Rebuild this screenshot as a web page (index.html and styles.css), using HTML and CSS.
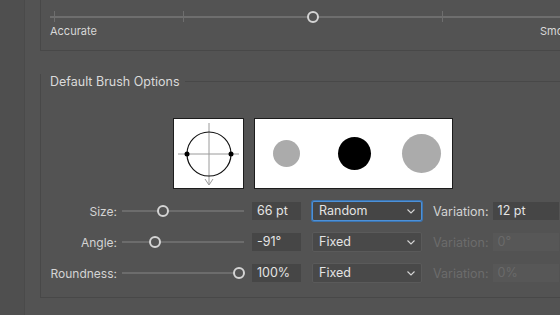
FILE: index.html
```html
<!DOCTYPE html>
<html lang="en">

<head>
    <meta charset="UTF-8">
    <title>Brush Options</title>
    <link rel="stylesheet" href="styles.css">
</head>

<body>
    <div id="sidebar"></div>
    <section id="dialog">
        <div class="topPanel">
            <div class="fidelity">
                <span class="tick tick1"></span>
                <span class="tick tick2"></span>
                <span class="tick tick3"></span>
                <span class="knob topKnob"></span>
            </div>
            <div class="fidelityLabels">
                <span>Accurate</span>
                <span>Smooth</span>
            </div>
        </div>

        <div class="group">
            <div class="groupTitle">
                <span>Default Brush Options</span>
            </div>

            <div class="previews">
                <div class="preview angleBox">
                    <svg width="69" height="69" viewBox="0 0 69 69">
                        <line x1="4" y1="35" x2="65" y2="35" stroke="#9a9a9a" stroke-width="1" />
                        <line x1="35" y1="4" x2="35" y2="65" stroke="#9a9a9a" stroke-width="1" />
                        <polyline points="31,60 35,66 39,60" fill="none" stroke="#9a9a9a" stroke-width="1" />
                        <circle cx="35" cy="35" r="22" fill="none" stroke="#111" stroke-width="1.2" />
                        <circle cx="13" cy="35" r="2.5" fill="#000" />
                        <circle cx="57" cy="35" r="2.5" fill="#000" />
                    </svg>
                </div>
                <div class="preview dotsBox">
                    <span class="dot dotSmall"></span>
                    <span class="dot dotMid"></span>
                    <span class="dot dotBig"></span>
                </div>
            </div>

            <div class="optionRow">
                <label class="rowLabel">Size:</label>
                <div class="track"><span class="knob" style="left: 41px;"></span></div>
                <div class="valueBox">66 pt</div>
                <div class="dropdown focused">Random
                    <svg class="chev" width="8" height="5" viewBox="0 0 8 5"><polyline points="0.5,0.5 4,4 7.5,0.5" fill="none" stroke="#d6d6d6" stroke-width="1.1" /></svg>
                </div>
                <label class="varLabel">Variation:</label>
                <div class="valueBox varBox">12 pt</div>
            </div>

            <div class="optionRow">
                <label class="rowLabel">Angle:</label>
                <div class="track"><span class="knob" style="left: 33px;"></span></div>
                <div class="valueBox">-91°</div>
                <div class="dropdown">Fixed
                    <svg class="chev" width="8" height="5" viewBox="0 0 8 5"><polyline points="0.5,0.5 4,4 7.5,0.5" fill="none" stroke="#d6d6d6" stroke-width="1.1" /></svg>
                </div>
                <label class="varLabel disabled">Variation:</label>
                <div class="valueBox varBox disabledBox">0°</div>
            </div>

            <div class="optionRow">
                <label class="rowLabel">Roundness:</label>
                <div class="track"><span class="knob" style="left: 117px;"></span></div>
                <div class="valueBox">100%</div>
                <div class="dropdown">Fixed
                    <svg class="chev" width="8" height="5" viewBox="0 0 8 5"><polyline points="0.5,0.5 4,4 7.5,0.5" fill="none" stroke="#d6d6d6" stroke-width="1.1" /></svg>
                </div>
                <label class="varLabel disabled">Variation:</label>
                <div class="valueBox varBox disabledBox">0%</div>
            </div>
        </div>
    </section>
</body>

</html>
```

FILE: styles.css
```css
body {
    margin: 0;
    padding: 0;
    width: 560px;
    height: 315px;
    overflow: hidden;
    display: flex;
    background-color: #535353;
    font-family: 'Inter', sans-serif;
    font-size: 12px;
    color: #dcdcdc;
}

#sidebar {
    width: 24px;
    flex-shrink: 0;
    background-color: #4f4f4f;
    border-right: 1px solid #4a4a4a;
}

#dialog {
    flex: 1;
    padding-left: 15px;
    min-width: 0;
    overflow: hidden;
}

.topPanel {
    height: 51px;
    padding-top: 16px;
    padding-left: 9px;
    border-left: 1px solid #484848;
    border-bottom: 1px solid #484848;
    box-sizing: border-box;
}

.fidelity {
    position: relative;
    height: 2px;
    width: 600px;
    background-color: #6e6e6e;
}

.tick {
    position: absolute;
    top: -5px;
    width: 1px;
    height: 11px;
    background-color: #6e6e6e;
}

.tick1 { left: 4px; }
.tick2 { left: 133px; }
.tick3 { left: 392px; }

.knob {
    position: absolute;
    top: -5px;
    width: 8px;
    height: 8px;
    margin-left: -6px;
    border: 2px solid #d4d4d4;
    border-radius: 50%;
    background-color: #535353;
}

.topKnob {
    left: 263px;
}

.fidelityLabels {
    display: flex;
    justify-content: space-between;
    width: 530px;
    margin-top: 6px;
    font-size: 11px;
    color: #d8d8d8;
}

.group {
    margin-top: 31px;
    height: 223px;
    border-left: 1px solid #484848;
    border-bottom: 1px solid #484848;
}

.groupTitle {
    display: flex;
    align-items: center;
    margin-top: -8px;
    padding-left: 9px;
    font-size: 12.5px;
    color: #dadada;
}

.groupTitle::after {
    content: "";
    flex: 1;
    height: 1px;
    margin-left: 5px;
    background-color: #484848;
}

.previews {
    display: flex;
    gap: 10px;
    margin-top: 29px;
    padding-left: 132px;
}

.preview {
    height: 69px;
    border: 1px solid #1c1c1c;
    background-color: #fff;
}

.angleBox {
    width: 69px;
}

.dotsBox {
    width: 197px;
    display: flex;
    align-items: center;
}

.dot {
    display: block;
    border-radius: 50%;
}

.dotSmall {
    width: 27px;
    height: 27px;
    background-color: #ababab;
    margin-left: 18px;
}

.dotMid {
    width: 33px;
    height: 33px;
    background-color: #000;
    margin-left: 38px;
}

.dotBig {
    width: 39px;
    height: 39px;
    background-color: #ababab;
    margin-left: 31px;
}

.optionRow {
    display: flex;
    align-items: center;
    height: 20px;
    margin-top: 11px;
}

.previews + .optionRow {
    margin-top: 12px;
}

.rowLabel {
    width: 76px;
    text-align: right;
    color: #d4d4d4;
}

.track {
    position: relative;
    width: 122px;
    height: 2px;
    margin-left: 5px;
    background-color: #6c6c6c;
}

.valueBox {
    width: 44px;
    height: 18px;
    line-height: 18px;
    padding-left: 5px;
    background-color: #464646;
    color: #e4e4e4;
    font-size: 12.5px;
}

.track + .valueBox {
    margin-left: 8px;
}

.dropdown {
    position: relative;
    width: 102px;
    height: 18px;
    line-height: 18px;
    margin-left: 11px;
    padding-left: 6px;
    border: 1px solid #5a5a5a;
    border-radius: 2px;
    background-color: #494949;
    color: #e4e4e4;
    font-size: 12.5px;
}

.dropdown.focused {
    border: 1px solid #4d91d8;
    box-shadow: 0 0 0 1px #3c74b0;
    background-color: #454545;
}

.chev {
    position: absolute;
    right: 6px;
    top: 7px;
}

.varLabel {
    margin-left: 11px;
    color: #d4d4d4;
    font-size: 12.5px;
}

.varBox {
    width: 61px;
    margin-left: 4px;
}

.disabled {
    color: #6c6c6c;
}

.disabledBox {
    background-color: #575757;
    color: #6a6a6a;
}
```
